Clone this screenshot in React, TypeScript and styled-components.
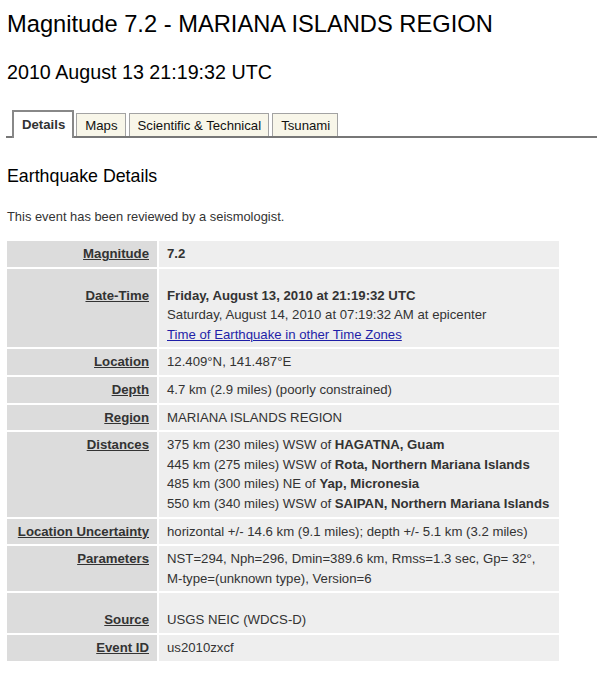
import styled, { createGlobalStyle } from "styled-components";

const GlobalStyle = createGlobalStyle`
  body {
    margin: 0;
    background: #fff;
    font-family: "Liberation Sans", Arial, sans-serif;
    color: #333;
  }
`;

const Page = styled.main`
  padding: 8px 0 20px 7px;
`;

const Title = styled.h1`
  margin: 0;
  font-size: 23.7px;
  line-height: 32px;
  font-weight: normal;
  color: #000;
`;

const SubTitle = styled.h2`
  margin: 20px 0 0;
  font-size: 19.7px;
  line-height: 24px;
  font-weight: normal;
  color: #000;
`;

const TabBar = styled.ul`
  list-style: none;
  display: flex;
  align-items: flex-end;
  margin: 26px 0 0 -1px;
  padding: 0 0 0 6px;
  border-bottom: 2px solid #777;
  height: 26px;
`;

const Tab = styled.li<{ $active?: boolean }>`
  box-sizing: border-box;
  margin-right: 3px;
  font-size: 13.2px;
  color: #111;
  ${(p) =>
    p.$active
      ? `
    height: 28px;
    margin-right: 2px;
    margin-bottom: -2px;
    padding: 5px 7px 0 8px;
    border: 2px solid #888;
    border-bottom: none;
    background: #fff;
    font-weight: bold;
    color: #333;
  `
      : `
    height: 23px;
    padding: 4px 7px 0 8px;
    border: 1px solid #a3a3a3;
    border-bottom: none;
    background: #f8f6e9;
  `}
`;

const SectionTitle = styled.h3`
  margin: 27px 0 0;
  font-size: 17.8px;
  line-height: 22px;
  font-weight: normal;
  color: #000;
`;

const Note = styled.p`
  margin: 22px 0 0;
  font-size: 12.9px;
  line-height: 16px;
  color: #333;
`;

const Table = styled.table`
  border-collapse: separate;
  border-spacing: 2px;
  margin: 14px 0 0 -2px;
  font-size: 13.2px;
  line-height: 19.6px;
`;

const Label = styled.th<{ $lead?: boolean }>`
  width: 150px;
  box-sizing: border-box;
  padding: ${(p) => (p.$lead ? "17px" : "3px")} 8px 3px 8px;
  background: #dcdcdc;
  text-align: right;
  vertical-align: top;
  font-weight: bold;
  color: #333;
  white-space: nowrap;
  text-decoration: underline;
`;

const Value = styled.td<{ $lead?: boolean }>`
  width: 400px;
  box-sizing: border-box;
  padding: ${(p) => (p.$lead ? "17px" : "3px")} 8px 3px 8px;
  background: #eeeeee;
  vertical-align: top;
  color: #333;
`;

const Line = styled.div``;

const Link = styled.a`
  color: #1f1fa8;
  text-decoration: underline;
`;

const rows: { label: string; lead?: boolean; content: React.ReactNode }[] = [
  { label: "Magnitude", content: <b>7.2</b> },
  {
    label: "Date-Time",
    lead: true,
    content: (
      <>
        <Line>
          <b>Friday, August 13, 2010 at 21:19:32 UTC</b>
        </Line>
        <Line>Saturday, August 14, 2010 at 07:19:32 AM at epicenter</Line>
        <Line>
          <Link href="#">Time of Earthquake in other Time Zones</Link>
        </Line>
      </>
    ),
  },
  { label: "Location", content: "12.409°N, 141.487°E" },
  { label: "Depth", content: "4.7 km (2.9 miles) (poorly constrained)" },
  { label: "Region", content: "MARIANA ISLANDS REGION" },
  {
    label: "Distances",
    content: (
      <>
        <Line>
          375 km (230 miles) WSW of <b>HAGATNA, Guam</b>
        </Line>
        <Line>
          445 km (275 miles) WSW of <b>Rota, Northern Mariana Islands</b>
        </Line>
        <Line>
          485 km (300 miles) NE of <b>Yap, Micronesia</b>
        </Line>
        <Line>
          550 km (340 miles) WSW of <b>SAIPAN, Northern Mariana Islands</b>
        </Line>
      </>
    ),
  },
  {
    label: "Location Uncertainty",
    content: "horizontal +/- 14.6 km (9.1 miles); depth +/- 5.1 km (3.2 miles)",
  },
  {
    label: "Parameters",
    content: (
      <>
        <Line>NST=294, Nph=296, Dmin=389.6 km, Rmss=1.3 sec, Gp= 32°,</Line>
        <Line>M-type=(unknown type), Version=6</Line>
      </>
    ),
  },
  { label: "Source", lead: true, content: "USGS NEIC (WDCS-D)" },
  { label: "Event ID", content: "us2010zxcf" },
];

export default function App() {
  return (
    <>
      <GlobalStyle />
      <Page>
        <Title>Magnitude 7.2 - MARIANA ISLANDS REGION</Title>
        <SubTitle>2010 August 13 21:19:32 UTC</SubTitle>
        <TabBar>
          <Tab $active>Details</Tab>
          <Tab>Maps</Tab>
          <Tab>Scientific &amp; Technical</Tab>
          <Tab>Tsunami</Tab>
        </TabBar>
        <SectionTitle>Earthquake Details</SectionTitle>
        <Note>This event has been reviewed by a seismologist.</Note>
        <Table>
          <tbody>
            {rows.map((r) => (
              <tr key={r.label}>
                <Label $lead={r.lead}>{r.label}</Label>
                <Value $lead={r.lead}>{r.content}</Value>
              </tr>
            ))}
          </tbody>
        </Table>
      </Page>
    </>
  );
}
